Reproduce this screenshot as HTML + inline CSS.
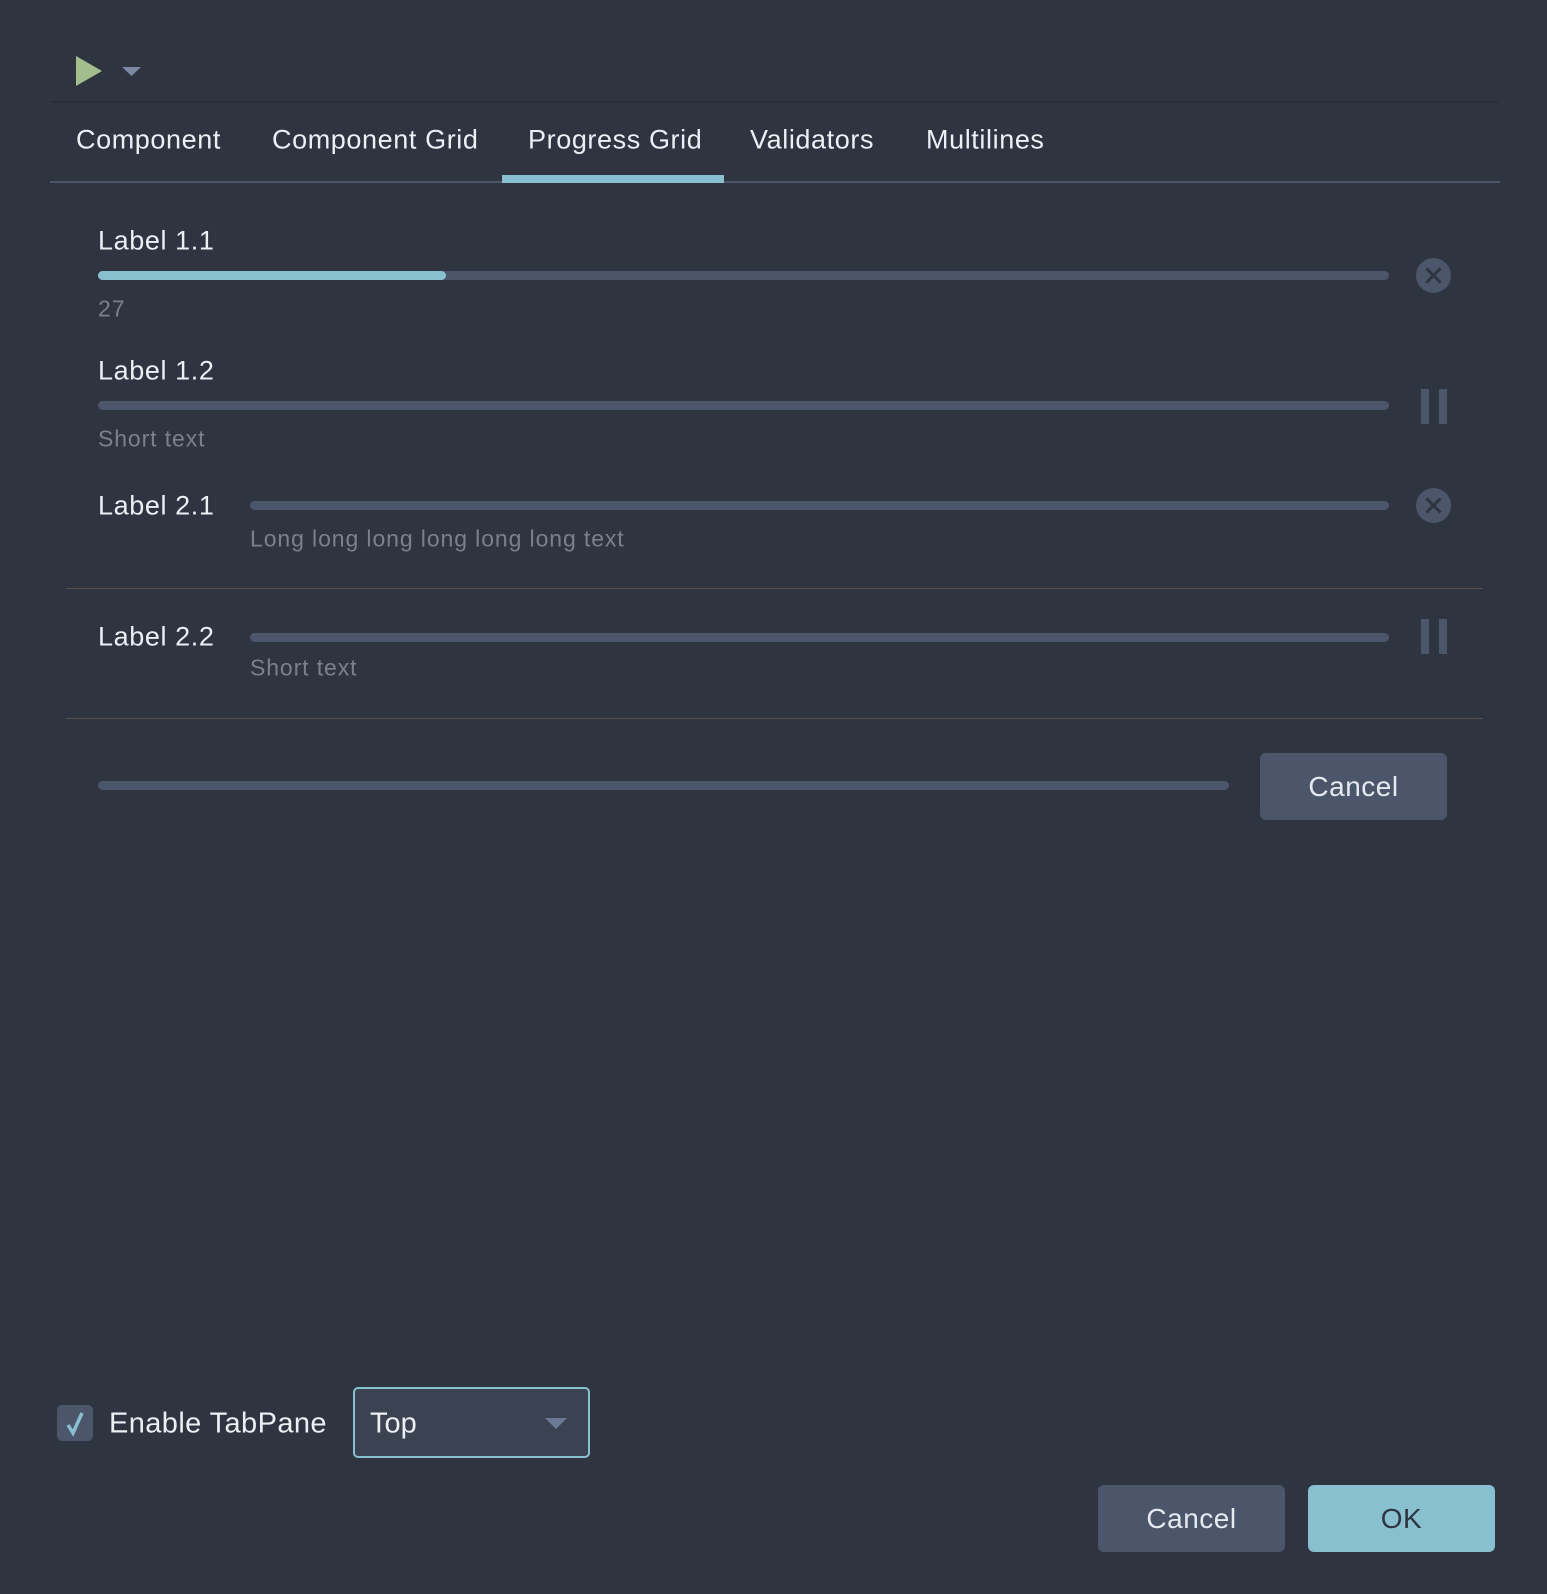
<!DOCTYPE html>
<html><head><meta charset="utf-8"><style>
*{margin:0;padding:0;box-sizing:border-box}
body{width:1547px;height:1594px;background:#2e3440;position:relative;overflow:hidden;font-family:"Liberation Sans",sans-serif;color:#eceff4}
.a{position:absolute;white-space:nowrap}
.t{font-size:27px;transform:translateY(-50%);letter-spacing:0.6px}
.s{font-size:23px;color:#7b818c;transform:translateY(-50%);letter-spacing:0.9px}
.bar{position:absolute;height:9px;border-radius:5px;background:#4c566a}
.hr{position:absolute;height:1px;background:#545049}
.btn{position:absolute;border-radius:6px;background:#4c566a;color:#e5e9f0;font-size:28px;display:flex;align-items:center;justify-content:center;letter-spacing:0.5px}
.pause{position:absolute;width:26px;height:35px}
.pause:before,.pause:after{content:"";position:absolute;top:0;width:8px;height:35px;background:#4c566a}
.pause:before{left:0}.pause:after{right:0}
</style></head><body>
<svg class="a" style="left:75px;top:55px" width="70" height="32"><polygon points="1,1 27,16 1,31" fill="#a3be8c"/><polygon points="47,12 66,12 56.5,21" fill="#7b88a1"/></svg>
<div class="a" style="left:51px;top:101px;width:1448px;height:2px;background:#292e38"></div>
<div class="a t" style="left:76px;top:140px">Component</div>
<div class="a t" style="left:272px;top:140px">Component Grid</div>
<div class="a t" style="left:528px;top:140px">Progress Grid</div>
<div class="a t" style="left:750px;top:140px">Validators</div>
<div class="a t" style="left:926px;top:140px">Multilines</div>
<div class="a" style="left:50px;top:181px;width:1450px;height:2px;background:#4c566a"></div>
<div class="a" style="left:502px;top:175px;width:222px;height:8px;background:#88c0d0"></div>

<div class="a t" style="left:98px;top:241px">Label 1.1</div>
<div class="bar" style="left:98px;top:271px;width:1291px"></div>
<div class="bar" style="left:98px;top:271px;width:348px;background:#88c0d0"></div>
<div class="a s" style="left:98px;top:309px">27</div>
<svg class="a" style="left:1416px;top:258px" width="35" height="35"><circle cx="17.5" cy="17.5" r="17.5" fill="#4c566a"/><path d="M10.5 10.5L24.5 24.5M24.5 10.5L10.5 24.5" stroke="#2e3440" stroke-width="3"/></svg>

<div class="a t" style="left:98px;top:371px">Label 1.2</div>
<div class="bar" style="left:98px;top:401px;width:1291px"></div>
<div class="a s" style="left:98px;top:439px">Short text</div>
<div class="pause" style="left:1421px;top:389px"></div>

<div class="a t" style="left:98px;top:506px">Label 2.1</div>
<div class="bar" style="left:250px;top:501px;width:1139px"></div>
<div class="a s" style="left:250px;top:539px">Long long long long long long text</div>
<svg class="a" style="left:1416px;top:488px" width="35" height="35"><circle cx="17.5" cy="17.5" r="17.5" fill="#4c566a"/><path d="M10.5 10.5L24.5 24.5M24.5 10.5L10.5 24.5" stroke="#2e3440" stroke-width="3"/></svg>
<div class="hr" style="left:66px;top:588px;width:1417px"></div>

<div class="a t" style="left:98px;top:637px">Label 2.2</div>
<div class="bar" style="left:250px;top:633px;width:1139px"></div>
<div class="a s" style="left:250px;top:668px">Short text</div>
<div class="pause" style="left:1421px;top:619px"></div>
<div class="hr" style="left:66px;top:718px;width:1417px"></div>

<div class="bar" style="left:98px;top:781px;width:1131px"></div>
<div class="btn" style="left:1260px;top:753px;width:187px;height:67px">Cancel</div>

<div class="a" style="left:57px;top:1405px;width:36px;height:36px;border-radius:5px;background:#4c566a"></div>
<svg class="a" style="left:60px;top:1408px" width="30" height="30"><path d="M8 17L13 25L22 5" stroke="#88c0d0" stroke-width="3.5" fill="none"/></svg>
<div class="a" style="left:109px;top:1424px;font-size:29px;transform:translateY(-50%);letter-spacing:0.4px">Enable TabPane</div>
<div class="a" style="left:353px;top:1387px;width:237px;height:71px;border:2px solid #88c0d0;border-radius:5px;background:#3b4252"></div>
<div class="a" style="left:370px;top:1424px;font-size:29px;transform:translateY(-50%)">Top</div>
<svg class="a" style="left:544px;top:1417px" width="24" height="14"><polygon points="1,1 23,1 12,12" fill="#6d7a96"/></svg>

<div class="btn" style="left:1098px;top:1485px;width:187px;height:67px">Cancel</div>
<div class="btn" style="left:1308px;top:1485px;width:187px;height:67px;background:#88c0d0;color:#2e3440">OK</div>
</body></html>
